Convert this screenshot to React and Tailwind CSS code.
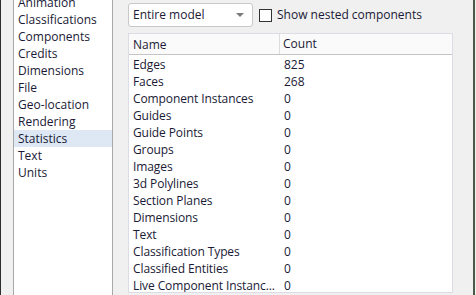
import React from "react";

const categories = [
  "Animation",
  "Classifications",
  "Components",
  "Credits",
  "Dimensions",
  "File",
  "Geo-location",
  "Rendering",
  "Statistics",
  "Text",
  "Units",
];

const stats = [
  ["Edges", "825"],
  ["Faces", "268"],
  ["Component Instances", "0"],
  ["Guides", "0"],
  ["Guide Points", "0"],
  ["Groups", "0"],
  ["Images", "0"],
  ["3d Polylines", "0"],
  ["Section Planes", "0"],
  ["Dimensions", "0"],
  ["Text", "0"],
  ["Classification Types", "0"],
  ["Classified Entities", "0"],
  ["Live Component Instanc...", "0"],
];

const App = () => {
  return (
    <div
      className="w-[476px] h-[295px] overflow-hidden bg-[#f0f0f0] flex text-[12px] text-[#1a1a36]"
      style={{ fontFamily: '"Open Sans", "Noto Sans", sans-serif' }}
    >
      <div className="w-px h-full bg-[#2e2e2e]" />
      <div className="w-[12px]" />
      {/* category list */}
      <div className="w-[100px] h-full bg-white border-x border-[#a8a8a8] overflow-hidden">
        <div className="mt-[-6px]">
          {categories.map((c) => (
            <div
              key={c}
              className={
                "h-[17px] leading-[17px] pl-[4px] whitespace-nowrap " +
                (c === "Statistics" ? "bg-[#dde8f4]" : "")
              }
            >
              {c}
            </div>
          ))}
        </div>
      </div>
      <div className="w-[15px]" />
      {/* statistics panel */}
      <div className="w-[325px] h-full flex flex-col">
        <div className="flex items-center h-[24px] mt-[3px]">
          <div className="w-[125px] h-[24px] bg-white border border-[#c8c8c8] rounded-[3px] flex items-center justify-between pl-[4px] pr-[8px]">
            <span>Entire model</span>
            <svg width="8" height="5" viewBox="0 0 8 5">
              <path d="M0 0 L8 0 L4 4 Z" fill="#7a7a7a" />
            </svg>
          </div>
          <div className="w-[13px] h-[13px] ml-[6px] bg-white border border-[#333333]" />
          <span className="ml-[5px]">Show nested components</span>
        </div>
        <div className="mt-[6px] h-[260px] border border-[#dcdce4] bg-white overflow-hidden">
          <div className="flex h-[21px] items-center bg-[#fafafa] border-b border-[#c4c4c4]">
            <div className="w-[151px] h-full pl-[4px] leading-[21px] border-r border-[#dcdcdc]">Name</div>
            <div className="pl-[3px]">Count</div>
          </div>
          <div className="pt-[1px]">
            {stats.map(([n, v]) => (
              <div key={n} className="flex h-[17px] leading-[17px]">
                <div className="w-[151px] pl-[4px] whitespace-nowrap overflow-hidden tracking-[-0.1px]">{n}</div>
                <div className="pl-[4px]">{v}</div>
              </div>
            ))}
          </div>
        </div>
      </div>
      <div className="flex-1" />
      <div className="w-[2px] h-full bg-[#4a5a48]" />
      <div className="w-px h-full bg-[#f0f0f0]" />
    </div>
  );
};

export default App;
